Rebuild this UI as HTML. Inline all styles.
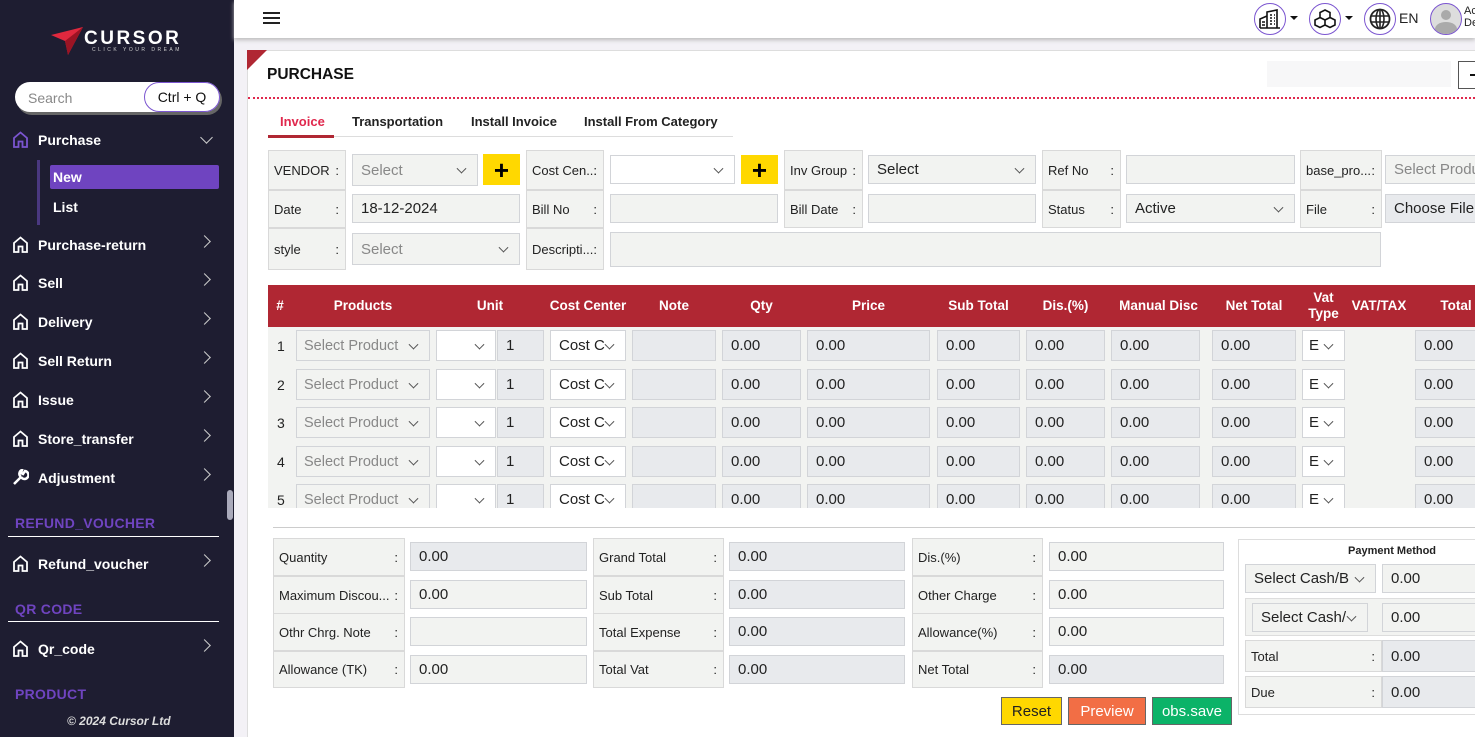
<!DOCTYPE html>
<html><head><meta charset="utf-8"><style>
*{box-sizing:border-box;margin:0;padding:0}
html{overflow:hidden;width:1475px;height:737px}
body{width:1475px;height:737px;overflow:hidden;font-family:"Liberation Sans",sans-serif;font-size:14px;color:#222;background:#f3f1f6;position:relative}
.a{position:absolute}
#sb{left:0;top:0;width:234px;height:737px;background:#1e1d31;color:#fff}
.mi{position:absolute;left:12px;font-weight:bold;font-size:14px;color:#fff;display:flex;align-items:center}
.mi svg{margin-right:9px}
.chev{position:absolute;left:200px;width:9px;height:9px;border-right:1.5px solid #ccc;border-top:1.5px solid #ccc;transform:rotate(45deg)}
.sec{position:absolute;left:15px;color:#6f44c0;font-weight:bold;font-size:14px;letter-spacing:.3px}
.hr{position:absolute;left:8px;width:211px;height:1px;background:#fff}
.lab{position:absolute;background:#f2f3f1;border:1px solid #d9d9d9;font-size:13px;color:#222;padding-left:5px;display:flex;align-items:center;white-space:nowrap;overflow:hidden}
.lab b{position:absolute;right:6px;font-weight:normal}
.in{position:absolute;background:#f2f3f1;border:1px solid #d2d4d8;font-size:15px;color:#222;padding-left:8px;display:flex;align-items:center;white-space:nowrap;overflow:hidden}
.g{background:#e8eaed}
.w{background:#fff}
.ph{color:#888}
.dd{padding-right:22px}
.dd::after{content:"";position:absolute;right:12px;top:50%;width:6px;height:6px;border-right:1.3px solid #555;border-bottom:1.3px solid #555;transform:translateY(-70%) rotate(45deg)}
.plus{position:absolute;background:#ffd800;font-size:26px;font-weight:bold;display:flex;align-items:center;justify-content:center;color:#000;line-height:1}
.th{position:absolute;top:285px;height:42px;color:#fff;font-weight:bold;font-size:13.5px;display:flex;align-items:center;justify-content:center;text-align:center;line-height:16px}
.btn{position:absolute;top:697px;height:28px;border:1px solid #666;font-size:15px;display:flex;align-items:center;justify-content:center}
.circ{position:absolute;top:3px;width:32px;height:32px;border:1.5px solid #7b55d0;border-radius:50%;display:flex;align-items:center;justify-content:center}
</style></head><body>

<div id="sb" class="a">
  <svg class="a" style="left:50px;top:26px" width="34" height="30" viewBox="0 0 34 30"><path d="M1 9 L33 1 L18 29 L15 15 Z" fill="#e0283e"/><path d="M15 15 L33 1 L18 29Z" fill="#9b1424"/></svg>
  <div class="a" style="left:84px;top:28px;font-size:19px;font-weight:bold;letter-spacing:2.5px;color:#fff">CURSOR</div>
  <div class="a" style="left:92px;top:47px;font-size:5px;letter-spacing:2.5px;color:#ccc">CLICK YOUR DREAM</div>
  <div class="a" style="left:15px;top:82px;width:205px;height:30px;background:#fff;border-radius:15px;box-shadow:2px 3px 0 #666"></div>
  <div class="a" style="left:28px;top:90px;color:#888;font-size:14px">Search</div>
  <div class="a" style="left:144px;top:82px;width:76px;height:30px;border:1.5px solid #7b55d0;border-radius:15px;background:#fff;color:#111;font-size:14px;display:flex;align-items:center;justify-content:center">Ctrl + Q</div>

  <div class="mi" style="top:131px"><svg width="17" height="17" viewBox="0 0 17 17"><path d="M2 16V7L8.5 1.5 15 7V16H10.5V10.5H6.5V16Z" fill="none" stroke="#7b55d0" stroke-width="1.8"/></svg>Purchase</div>
  <div class="a" style="left:202px;top:133px;width:9px;height:9px;border-right:1.5px solid #ccc;border-bottom:1.5px solid #ccc;transform:rotate(45deg)"></div>
  <div class="a" style="left:37px;top:160px;width:3px;height:65px;background:#4a3880"></div>
  <div class="a" style="left:50px;top:165px;width:169px;height:24px;background:#6f44c0;border-radius:2px;font-weight:bold;padding:4px 0 0 3px">New</div>
  <div class="a" style="left:53px;top:199px;font-weight:bold">List</div>

  <div class="mi" style="top:236px"><svg width="17" height="17" viewBox="0 0 17 17"><path d="M2 16V7L8.5 1.5 15 7V16H10.5V10.5H6.5V16Z" fill="none" stroke="#fff" stroke-width="1.8"/></svg>Purchase-return</div><div class="chev" style="top:237px"></div>
  <div class="mi" style="top:274px"><svg width="17" height="17" viewBox="0 0 17 17"><path d="M2 16V7L8.5 1.5 15 7V16H10.5V10.5H6.5V16Z" fill="none" stroke="#fff" stroke-width="1.8"/></svg>Sell</div><div class="chev" style="top:275px"></div>
  <div class="mi" style="top:313px"><svg width="17" height="17" viewBox="0 0 17 17"><path d="M2 16V7L8.5 1.5 15 7V16H10.5V10.5H6.5V16Z" fill="none" stroke="#fff" stroke-width="1.8"/></svg>Delivery</div><div class="chev" style="top:314px"></div>
  <div class="mi" style="top:352px"><svg width="17" height="17" viewBox="0 0 17 17"><path d="M2 16V7L8.5 1.5 15 7V16H10.5V10.5H6.5V16Z" fill="none" stroke="#fff" stroke-width="1.8"/></svg>Sell Return</div><div class="chev" style="top:353px"></div>
  <div class="mi" style="top:391px"><svg width="17" height="17" viewBox="0 0 17 17"><path d="M2 16V7L8.5 1.5 15 7V16H10.5V10.5H6.5V16Z" fill="none" stroke="#fff" stroke-width="1.8"/></svg>Issue</div><div class="chev" style="top:392px"></div>
  <div class="mi" style="top:430px"><svg width="17" height="17" viewBox="0 0 17 17"><path d="M2 16V7L8.5 1.5 15 7V16H10.5V10.5H6.5V16Z" fill="none" stroke="#fff" stroke-width="1.8"/></svg>Store_transfer</div><div class="chev" style="top:431px"></div>
  <div class="mi" style="top:469px"><svg width="17" height="17" viewBox="0 0 17 17"><path d="M2 15L9 8M9 8a4 4 0 1 0 4-6l-2 3-2-1 1-3a4 4 0 0 0-1 7" fill="none" stroke="#fff" stroke-width="2.5"/></svg>Adjustment</div><div class="chev" style="top:470px"></div>
  <div class="a" style="left:227px;top:490px;width:6px;height:30px;background:#aab;border-radius:3px"></div>
  <div class="sec" style="top:515px">REFUND_VOUCHER</div><div class="hr" style="top:536px"></div>
  <div class="mi" style="top:555px"><svg width="17" height="17" viewBox="0 0 17 17"><path d="M2 16V7L8.5 1.5 15 7V16H10.5V10.5H6.5V16Z" fill="none" stroke="#fff" stroke-width="1.8"/></svg>Refund_voucher</div><div class="chev" style="top:556px"></div>
  <div class="sec" style="top:601px">QR CODE</div><div class="hr" style="top:621px"></div>
  <div class="mi" style="top:640px"><svg width="17" height="17" viewBox="0 0 17 17"><path d="M2 16V7L8.5 1.5 15 7V16H10.5V10.5H6.5V16Z" fill="none" stroke="#fff" stroke-width="1.8"/></svg>Qr_code</div><div class="chev" style="top:641px"></div>
  <div class="sec" style="top:686px">PRODUCT</div>
  <div class="a" style="left:67px;top:714px;font-size:12px;font-style:italic;font-weight:bold;color:#ddd">© 2024 Cursor Ltd</div>
</div>

<!-- top bar -->
<div class="a" style="left:234px;top:0;width:1241px;height:38px;background:#fff;box-shadow:0 2px 4px #bbb"></div>
<div class="a" style="left:263px;top:12px;width:17px;height:2px;background:#222;box-shadow:0 5px 0 #222,0 10px 0 #222"></div>
<div class="circ" style="left:1254px"><svg width="22" height="20" viewBox="0 0 22 20"><path d="M1 19V10L8 7V19M8 19V3L18 1V19M1 19H21M11 6h2M15 6h1M11 9h2M15 9h1M11 12h2M15 12h1M11 15h2M15 15h1M3 13h3M3 16h3" fill="none" stroke="#111" stroke-width="1.6"/></svg></div>
<div class="a" style="left:1290px;top:16px;border:4px solid transparent;border-top:4px solid #111"></div>
<div class="circ" style="left:1309px"><svg width="22" height="20" viewBox="0 0 22 20"><path d="M11 1l5 2.5v5L11 11 6 8.5v-5Z M6 8.5l5 2.5v5L6 18.5 1 16v-5Z M16 8.5l5 2.5v5l-5 2.5-5-2.5v-5Z" fill="none" stroke="#111" stroke-width="1.6"/></svg></div>
<div class="a" style="left:1345px;top:16px;border:4px solid transparent;border-top:4px solid #111"></div>
<div class="circ" style="left:1364px"><svg width="22" height="22" viewBox="0 0 22 22"><circle cx="11" cy="11" r="9.5" fill="none" stroke="#222" stroke-width="1.8"/><ellipse cx="11" cy="11" rx="4" ry="9.5" fill="none" stroke="#222" stroke-width="1.6"/><path d="M2 8h18M2 14h18M11 1.5v19" stroke="#222" stroke-width="1.6"/></svg></div>
<div class="a" style="left:1399px;top:10px;font-size:14px">EN</div>
<div class="a" style="left:1430px;top:3px;width:32px;height:32px;border-radius:50%;border:1.5px solid #7b55d0;background:#ddd;overflow:hidden"><div class="a" style="left:10px;top:6px;width:10px;height:10px;border-radius:50%;background:#aaa"></div><div class="a" style="left:4px;top:18px;width:22px;height:14px;border-radius:50% 50% 0 0;background:#aaa"></div></div>
<div class="a" style="left:1464px;top:5px;font-size:11px;line-height:12px">Ac<br>De</div>

<!-- card -->
<div class="a" style="left:247px;top:50px;width:1240px;height:687px;background:#fff;border:1px solid #ddd;border-bottom:none"></div>
<div class="a" style="left:247px;top:50px;border-top:20px solid #b02733;border-right:20px solid transparent"></div>
<div class="a" style="left:267px;top:66px;font-weight:bold;font-size:15.5px;color:#111">PURCHASE</div>
<div class="a" style="left:1267px;top:61px;width:184px;height:26px;background:#f7f7f8"></div>
<div class="a" style="left:1458px;top:61px;width:30px;height:28px;border:1.5px solid #555;background:#fff"></div>
<div class="a" style="left:1470px;top:74px;width:8px;height:2px;background:#111"></div>
<div class="a" style="left:248px;top:97px;width:1227px;border-top:2px dotted #e0284d"></div>

<div class="a" style="left:268px;top:136px;width:465px;height:1px;background:#ddd"></div>
<div class="a" style="left:268px;top:135px;width:66px;height:3px;background:#b02733"></div>
<div class="a" style="left:280px;top:114px;color:#e0284d;font-weight:bold;font-size:13px">Invoice</div>
<div class="a" style="left:352px;top:114px;font-weight:bold;font-size:13px">Transportation</div>
<div class="a" style="left:471px;top:114px;font-weight:bold;font-size:13px">Install Invoice</div>
<div class="a" style="left:584px;top:114px;font-weight:bold;font-size:13px">Install From Category</div>

<!-- form grid -->
<div class="lab" style="left:268px;top:150px;width:78px;height:40px">VENDOR<b>:</b></div>
<div class="in dd ph" style="left:352px;top:154px;width:126px;height:32px">Select</div>
<div class="plus" style="left:483px;top:154px;width:37px;height:31px">+</div>
<div class="lab" style="left:526px;top:150px;width:78px;height:40px">Cost Cen...<b>:</b></div>
<div class="in dd w" style="left:610px;top:155px;width:125px;height:29px"></div>
<div class="plus" style="left:741px;top:155px;width:37px;height:29px">+</div>
<div class="lab" style="left:784px;top:150px;width:79px;height:40px">Inv Group<b>:</b></div>
<div class="in dd" style="left:868px;top:155px;width:168px;height:29px">Select</div>
<div class="lab" style="left:1042px;top:150px;width:79px;height:40px">Ref No<b>:</b></div>
<div class="in" style="left:1126px;top:155px;width:169px;height:29px"></div>
<div class="lab" style="left:1300px;top:150px;width:82px;height:40px">base_pro...<b>:</b></div>
<div class="in ph" style="left:1385px;top:155px;width:100px;height:29px">Select Produ</div>

<div class="lab" style="left:268px;top:190px;width:78px;height:38px">Date<b>:</b></div>
<div class="in" style="left:352px;top:194px;width:168px;height:29px">18-12-2024</div>
<div class="lab" style="left:526px;top:190px;width:78px;height:38px">Bill No<b>:</b></div>
<div class="in" style="left:610px;top:194px;width:168px;height:29px"></div>
<div class="lab" style="left:784px;top:190px;width:79px;height:38px">Bill Date<b>:</b></div>
<div class="in" style="left:868px;top:194px;width:168px;height:29px"></div>
<div class="lab" style="left:1042px;top:190px;width:79px;height:38px">Status<b>:</b></div>
<div class="in dd" style="left:1126px;top:194px;width:169px;height:29px">Active</div>
<div class="lab" style="left:1300px;top:190px;width:82px;height:38px">File<b>:</b></div>
<div class="in g" style="left:1385px;top:194px;width:100px;height:29px">Choose File</div>

<div class="lab" style="left:268px;top:228px;width:78px;height:42px">style<b>:</b></div>
<div class="in dd ph" style="left:352px;top:233px;width:168px;height:32px">Select</div>
<div class="lab" style="left:526px;top:228px;width:78px;height:42px">Descripti...<b>:</b></div>
<div class="in" style="left:610px;top:232px;width:771px;height:35px"></div>

<!-- table -->
<div class="a" style="left:268px;top:285px;width:1207px;height:42px;background:#b02733"></div>
<div class="a" style="left:268px;top:327px;width:1207px;height:181px;background:#f2f3f1"></div>
<div class="th" style="left:270px;width:20px">#</div>
<div class="th" style="left:296px;width:134px">Products</div>
<div class="th" style="left:436px;width:108px">Unit</div>
<div class="th" style="left:548px;width:80px">Cost Center</div>
<div class="th" style="left:632px;width:84px">Note</div>
<div class="th" style="left:722px;width:79px">Qty</div>
<div class="th" style="left:807px;width:123px">Price</div>
<div class="th" style="left:937px;width:83px">Sub Total</div>
<div class="th" style="left:1026px;width:79px">Dis.(%)</div>
<div class="th" style="left:1111px;width:95px">Manual Disc</div>
<div class="th" style="left:1212px;width:84px">Net Total</div>
<div class="th" style="left:1302px;width:43px">Vat<br>Type</div>
<div class="th" style="left:1347px;width:64px">VAT/TAX</div>
<div class="th" style="left:1430px;width:52px">Total</div>

<div id="rows"></div>
<div class="a" style="left:268px;top:508px;width:1207px;height:16px;background:#fff"></div>
<div class="a" style="left:273px;top:527px;width:1202px;height:1px;background:#ccc"></div>

<div id="sum"></div>

<div class="a" style="left:1238px;top:539px;width:240px;height:176px;border:1px solid #ddd;background:#fff"></div>
<div class="a" style="left:1348px;top:545px;font-weight:bold;font-size:11px">Payment Method</div>
<div class="in dd" style="left:1245px;top:564px;width:131px;height:29px">Select Cash/B</div>
<div class="in" style="left:1382px;top:564px;width:100px;height:29px">0.00</div>
<div class="a" style="left:1245px;top:598px;width:240px;height:38px;background:#f2f3f1;border:1px solid #ddd"></div>
<div class="in dd" style="left:1252px;top:603px;width:116px;height:29px">Select Cash/</div>
<div class="in" style="left:1382px;top:603px;width:100px;height:29px">0.00</div>
<div class="lab" style="left:1245px;top:640px;width:137px;height:32px">Total<b>:</b></div>
<div class="in g" style="left:1382px;top:640px;width:100px;height:32px">0.00</div>
<div class="lab" style="left:1245px;top:676px;width:137px;height:32px">Due<b>:</b></div>
<div class="in g" style="left:1382px;top:676px;width:100px;height:32px">0.00</div>

<div class="btn" style="left:1001px;width:61px;background:#ffd800">Reset</div>
<div class="btn" style="left:1068px;width:78px;background:#f26e45;color:#fff">Preview</div>
<div class="btn" style="left:1152px;width:80px;background:#0bb368;color:#fff">obs.save</div>

<script>
var r='',ys=[330,369,407,446,484];
ys.forEach(function(y,i){
 var h=31;
 r+='<div class="a" style="left:277px;top:'+(y+8)+'px;font-size:14px">'+(i+1)+'</div>';
 r+='<div class="in ph dd" style="left:296px;top:'+y+'px;width:134px;height:'+h+'px;padding-left:7px;font-size:14.5px">Select Product</div>';
 r+='<div class="in dd w" style="left:436px;top:'+y+'px;width:60px;height:'+h+'px"></div>';
 r+='<div class="in g" style="left:497px;top:'+y+'px;width:47px;height:'+h+'px">1</div>';
 r+='<div class="in dd w" style="left:550px;top:'+y+'px;width:76px;height:'+h+'px">Cost C</div>';
 [[632,84,''],[722,79,'0.00'],[807,123,'0.00'],[937,83,'0.00'],[1026,79,'0.00'],[1111,89,'0.00'],[1212,84,'0.00'],[1415,70,'0.00']].forEach(function(c){
  r+='<div class="in g" style="left:'+c[0]+'px;top:'+y+'px;width:'+c[1]+'px;height:'+h+'px">'+c[2]+'</div>';});
 r+='<div class="in dd w" style="left:1302px;top:'+y+'px;width:43px;height:'+h+'px;padding-left:6px">E</div>';
});
document.getElementById('rows').innerHTML=r;
var s='',rows=[538,576,613,651];
var L=[['Quantity','0.00','g'],['Maximum Discou...','0.00',''],['Othr Chrg. Note','',''],['Allowance (TK)','0.00','']];
var M=[['Grand Total','0.00','g'],['Sub Total','0.00','g'],['Total Expense','0.00','g'],['Total Vat','0.00','g']];
var R=[['Dis.(%)','0.00',''],['Other Charge','0.00',''],['Allowance(%)','0.00',''],['Net Total','0.00','g']];
rows.forEach(function(y,i){
 [[273,132,410,177,L],[593,131,729,176,M],[912,131,1049,175,R]].forEach(function(c){
  var d=c[4][i];
  s+='<div class="lab" style="left:'+c[0]+'px;top:'+y+'px;width:'+c[1]+'px;height:'+(i==3?37:38)+'px">'+d[0]+'<b>:</b></div>';
  s+='<div class="in '+d[2]+'" style="left:'+c[2]+'px;top:'+(y+4)+'px;width:'+c[3]+'px;height:29px">'+d[1]+'</div>';
 });
});
document.getElementById('sum').innerHTML=s;
</script>
</body></html>
